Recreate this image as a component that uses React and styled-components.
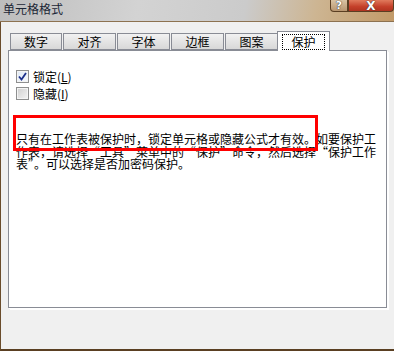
import React from 'react';
import styled, { createGlobalStyle } from 'styled-components';

const GlobalStyle = createGlobalStyle`
  html, body {
    margin: 0;
    padding: 0;
    background: #f0f0f0;
  }
  * {
    box-sizing: border-box;
  }
`;

const FONT = `"Noto Sans CJK SC", "Liberation Sans", sans-serif`;

const Window = styled.div`
  position: relative;
  width: 394px;
  height: 351px;
  display: flex;
  flex-direction: column;
  overflow: hidden;
  font-family: ${FONT};
  font-size: 12px;
  color: #000;
`;

const TitleBar = styled.div`
  height: 22px;
  flex-shrink: 0;
  display: flex;
  align-items: flex-start;
  justify-content: space-between;
  background: linear-gradient(100deg, #bdbdbd 0%, #d3d3d3 35%, #cbcbcb 62%, #cdb592 80%, #c29a68 100%);
  border-bottom: 1px solid #8d7250;
`;

const Title = styled.div`
  padding: 2px 0 0 3px;
  font-size: 12px;
  line-height: 14px;
  color: #1b2535;
`;

const Controls = styled.div`
  display: flex;
  height: 12px;
`;

const CtrlButton = styled.div`
  width: ${p => p.$w}px;
  height: 12px;
  display: flex;
  align-items: center;
  justify-content: center;
  font-family: "DejaVu Sans", sans-serif;
  font-weight: bold;
  font-size: ${p => p.$fs}px;
  line-height: 1;
  color: #fff;
  text-shadow: 0 0 1px #333, 0 0 1px #333;
  border: 1px solid #5a3e22;
  border-top: none;
  border-radius: ${p => p.$radius};
  background: ${p => p.$bg};
`;

const Body = styled.div`
  flex: 1;
  display: flex;
  flex-direction: column;
  padding: 9px 0 0 7px;
  border-left: 1px solid #6a4c2b;
  border-bottom: 2px solid #5a3f22;
  background: #f0f0f0;
`;

const TabStrip = styled.div`
  display: flex;
  align-items: flex-end;
  gap: 1px;
  padding-left: 2px;
  height: 19px;
  position: relative;
  z-index: 1;
`;

const Tab = styled.div`
  width: ${p => (p.$first ? 52 : 53)}px;
  height: ${p => (p.$active ? 20 : 17)}px;
  margin: ${p => (p.$active ? '0 -2px -1px -2px' : '0')};
  display: flex;
  align-items: center;
  justify-content: center;
  border: 1px solid #898c95;
  border-bottom: ${p => (p.$active ? 'none' : '1px solid #898c95')};
  background: ${p => (p.$active ? '#fff' : 'linear-gradient(#f2f2f2, #e4e4e4 50%, #d8d8d8)')};
  font-size: 12px;
  line-height: 14px;
  position: relative;
  z-index: ${p => (p.$active ? 2 : 1)};
`;

const Focus = styled.span`
  outline: 1px dotted #000;
  outline-offset: 0;
  padding: 0 8px;
`;

const Panel = styled.div`
  width: 379px;
  height: 258px;
  background: #fff;
  border: 1px solid #898c95;
  box-shadow: 1px 1px 0 #fff, 2px 2px 0 #fff;
  padding: 17px 0 0 7px;
`;

const CheckRow = styled.label`
  display: flex;
  align-items: center;
  gap: 4px;
  height: 17px;
  line-height: 13px;
`;

const Box = styled.span`
  width: 13px;
  height: 13px;
  border: 1px solid #8e8f8f;
  background: ${p => (p.$checked ? 'linear-gradient(135deg, #dfe9f5, #f6f9fd)' : 'linear-gradient(135deg, #cfcfcf, #f4f4f4)')};
  box-shadow: inset 0 0 0 1px #f4f4f4;
  display: flex;
  align-items: center;
  justify-content: center;
`;

const Desc = styled.p`
  margin: 31px 0 0 0;
  width: 361px;
  font-size: 12px;
  line-height: 12.5px;
  font-feature-settings: "fwid" 1;
  word-break: break-all;
`;

const Highlight = styled.div`
  position: absolute;
  left: 13px;
  top: 115px;
  width: 305px;
  height: 36px;
  border: 3px solid #ff0000;
  pointer-events: none;
`;

const tabs = ['数字', '对齐', '字体', '边框', '图案', '保护'];

const Check = () => (
  <svg width="9" height="9" viewBox="0 0 9 9">
    <path d="M1 4.5 L3.5 7.5 L8 1" fill="none" stroke="#1c2f8a" strokeWidth="1.8" />
  </svg>
);

export default function App() {
  return (
    <>
      <GlobalStyle />
      <Window>
        <TitleBar>
          <Title>单元格格式</Title>
          <Controls>
            <CtrlButton $w={18} $fs={11} $radius="0 0 0 4px" $bg="linear-gradient(#d9c3a3, #b89670)">?</CtrlButton>
            <CtrlButton $w={46} $fs={12} $radius="0 0 4px 0" $bg="linear-gradient(#e07a5c, #c4402a 60%, #b03420)">X</CtrlButton>
          </Controls>
        </TitleBar>
        <Body>
          <TabStrip>
            {tabs.map((t, i) => (
              <Tab key={t} $first={i === 0} $active={i === 5}>
                {i === 5 ? <Focus>{t}</Focus> : t}
              </Tab>
            ))}
          </TabStrip>
          <Panel>
            <CheckRow>
              <Box $checked><Check /></Box>
              <span>锁定(<u>L</u>)</span>
            </CheckRow>
            <CheckRow>
              <Box />
              <span>隐藏(<u>I</u>)</span>
            </CheckRow>
            <Desc>
              只有在工作表被保护时，锁定单元格或隐藏公式才有效。如要保护工作表，请选择“工具”菜单中的“保护”命令，然后选择“保护工作表”。可以选择是否加密码保护。
            </Desc>
          </Panel>
        </Body>
        <Highlight />
      </Window>
    </>
  );
}
